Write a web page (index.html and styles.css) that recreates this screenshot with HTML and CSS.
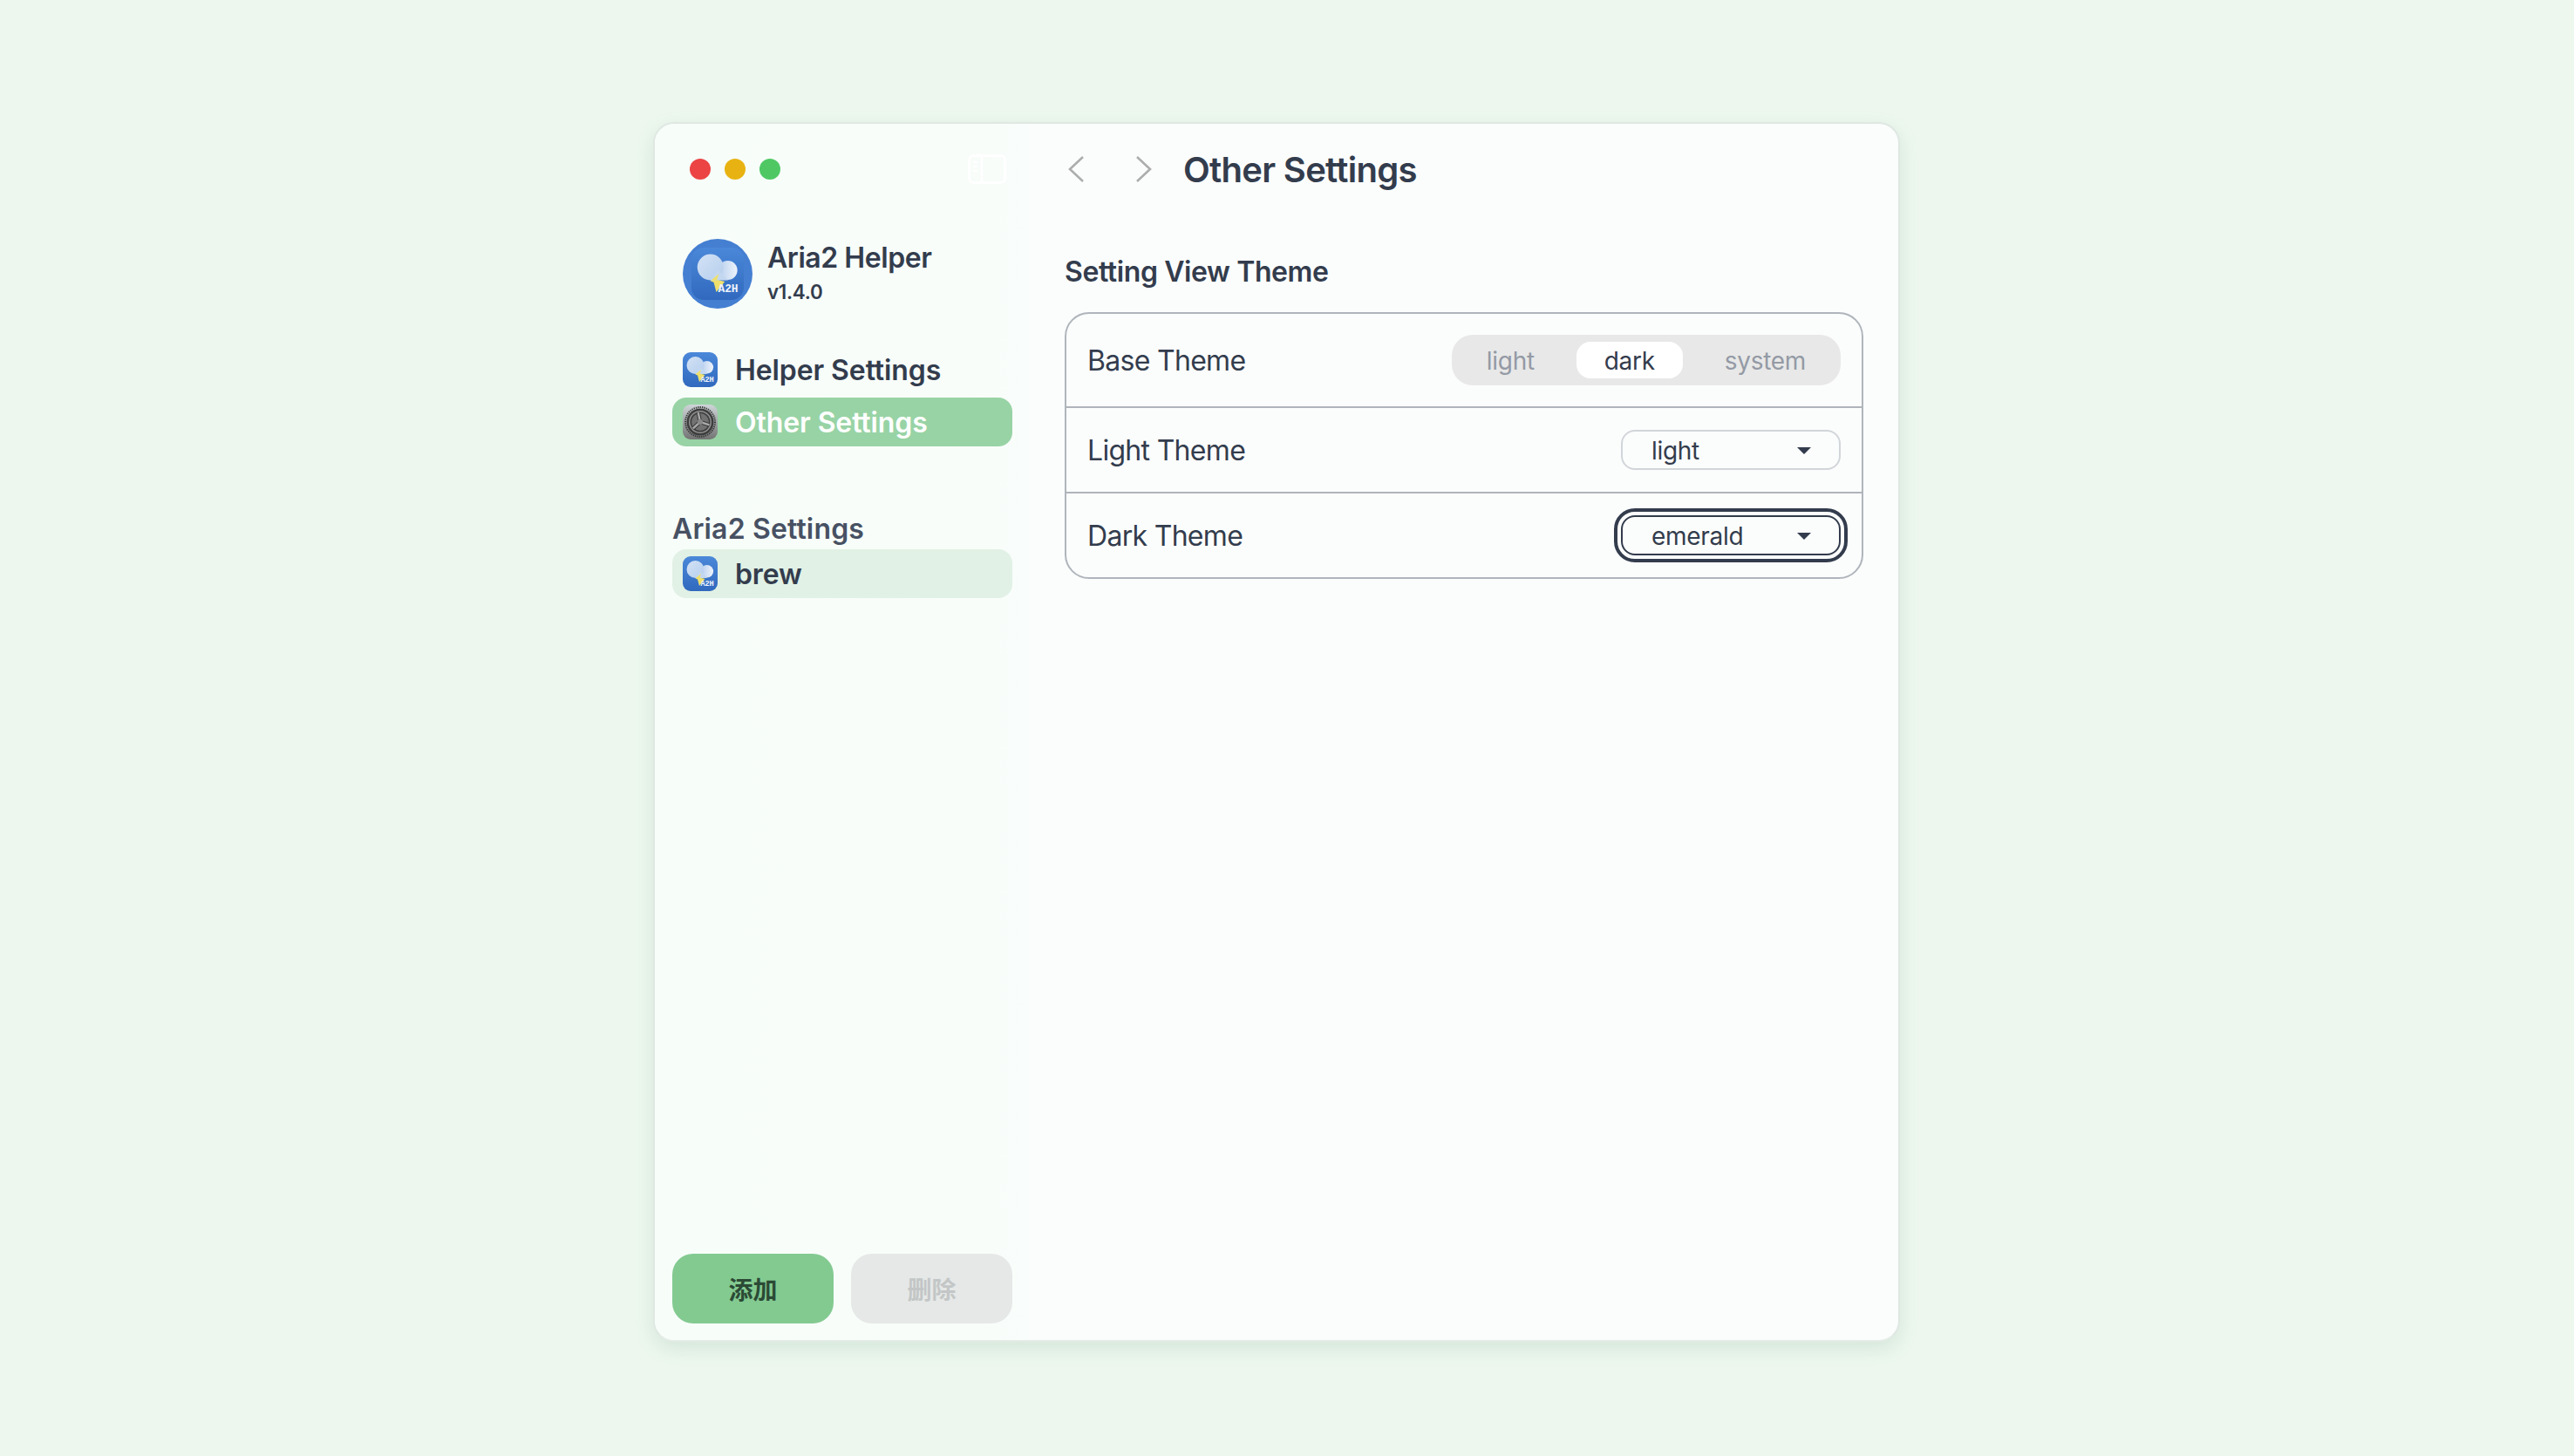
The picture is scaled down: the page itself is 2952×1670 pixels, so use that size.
FILE: index.html
```html
<!DOCTYPE html>
<html lang="en">
<head>
    <meta charset="UTF-8">
    <title>Aria2 Helper</title>
    <link rel="stylesheet" href="styles.css">
</head>
<body>
    <svg class="defs" width="0" height="0">
        <defs>
            <linearGradient id="tileBlue" x1="0" y1="0" x2="0" y2="1">
                <stop offset="0" stop-color="#4b88d9"/>
                <stop offset="1" stop-color="#3069be"/>
            </linearGradient>
            <linearGradient id="cloudFill" x1="0" y1="0" x2="1" y2="1">
                <stop offset="0" stop-color="#d3e2f5"/>
                <stop offset="1" stop-color="#b5ceed"/>
            </linearGradient>
            <linearGradient id="cloudFill2" x1="0" y1="0" x2="1" y2="0">
                <stop offset="0" stop-color="#b7cfee"/>
                <stop offset="1" stop-color="#eef3fb"/>
            </linearGradient>
            <linearGradient id="tileGrey" x1="0" y1="0" x2="0" y2="1">
                <stop offset="0" stop-color="#ced5d8"/>
                <stop offset="1" stop-color="#737373"/>
            </linearGradient>
            <symbol id="a2hArt" viewBox="0 0 40 40">
                <path d="M21 17 L19.5 24.5 L25.5 26 L19 34 L17 26.5 L14.5 25.5 Z" fill="#efe06c"/>
                <circle cx="27.8" cy="17.3" r="7.3" fill="url(#cloudFill2)"/>
                <circle cx="14.5" cy="15" r="10" fill="url(#cloudFill)"/>
                <path d="M14.5 25 H27.8 V24.6 L20 17 Z" fill="#c3d7f0"/>
                <path d="M21 20 L19.5 24.5 L22 25 H15 Z" fill="#efe06c"/>
                <text x="28" y="34" class="a2h-text" text-anchor="middle">A2H</text>
            </symbol>
            <symbol id="appTile" viewBox="0 0 40 40">
                <rect width="40" height="40" rx="9" fill="url(#tileBlue)"/>
                <use href="#a2hArt" width="40" height="40"/>
            </symbol>
            <symbol id="gearTile" viewBox="0 0 40 40">
                <rect width="40" height="40" rx="9" fill="url(#tileGrey)"/>
                <circle cx="20" cy="20" r="17" fill="none" stroke="#3c3c3c" stroke-width="2" stroke-dasharray="1.4 1"/>
                <circle cx="20" cy="20" r="15.5" fill="#3d3d3d"/>
                <circle cx="20" cy="20" r="13" fill="#929292"/>
                <circle cx="20" cy="20" r="11.5" fill="#3f3f3f"/>
                <circle cx="20" cy="20" r="10" fill="#727272"/>
                <g transform="rotate(-12 20 20)">
                    <path d="M20 20 V9 M20 20 L10.5 25.5 M20 20 L29.5 25.5" stroke="#3a3a3a" stroke-width="4.5"/>
                    <path d="M20 20 V9 M20 20 L10.5 25.5 M20 20 L29.5 25.5" stroke="#a9a9a9" stroke-width="2.4"/>
                </g>
                <circle cx="20" cy="20" r="3" fill="#8a8a8a"/>
            </symbol>
        </defs>
    </svg>

    <div class="window">
        <aside class="sidebar">
            <div class="titlebar">
                <div class="lights">
                    <span class="light light-red"></span>
                    <span class="light light-yellow"></span>
                    <span class="light light-green"></span>
                </div>
                <svg class="toggle" width="44" height="34" viewBox="0 0 44 34" fill="none" stroke="#fff" stroke-width="2.5">
                    <rect x="1.5" y="1.5" width="41" height="31" rx="5"/>
                    <path d="M16 2 V32"/>
                    <path d="M6 9 H11 M6 14 H11 M6 19 H11" stroke-width="2"/>
                </svg>
            </div>

            <div class="brand">
                <svg class="brand-logo" width="80" height="80" viewBox="0 0 80 80">
                    <circle cx="40" cy="40" r="40" fill="#447fd2"/>
                    <rect x="10" y="10" width="60" height="60" rx="14" fill="url(#tileBlue)"/>
                    <use href="#a2hArt" x="10" y="10" width="60" height="60"/>
                </svg>
                <div class="brand-text">
                    <div class="brand-name">Aria2 Helper</div>
                    <div class="brand-version">v1.4.0</div>
                </div>
            </div>

            <ul class="menu">
                <li class="menu-item">
                    <svg class="menu-icon"><use href="#appTile"/></svg>
                    <span>Helper Settings</span>
                </li>
                <li class="menu-item selected">
                    <svg class="menu-icon"><use href="#gearTile"/></svg>
                    <span>Other Settings</span>
                </li>
            </ul>

            <h3 class="menu-title">Aria2 Settings</h3>
            <ul class="menu">
                <li class="menu-item current">
                    <svg class="menu-icon"><use href="#appTile"/></svg>
                    <span>brew</span>
                </li>
            </ul>

            <div class="actions">
                <button class="btn btn-add">添加</button>
                <button class="btn btn-del">删除</button>
            </div>
        </aside>

        <main class="content">
            <header class="topbar">
                <svg class="chevron" width="20" height="32" viewBox="0 0 20 32" fill="none" stroke="#adadad" stroke-width="2.6">
                    <path d="M18 2 L3 16 L18 30"/>
                </svg>
                <svg class="chevron chevron-next" width="20" height="32" viewBox="0 0 20 32" fill="none" stroke="#adadad" stroke-width="2.6">
                    <path d="M2 2 L17 16 L2 30"/>
                </svg>
                <h1 class="page-title">Other Settings</h1>
            </header>

            <h2 class="section-title">Setting View Theme</h2>
            <div class="panel">
                <div class="row row-tall">
                    <span class="row-label">Base Theme</span>
                    <div class="tabs">
                        <span class="tab">light</span>
                        <span class="tab active">dark</span>
                        <span class="tab">system</span>
                    </div>
                </div>
                <div class="row">
                    <span class="row-label">Light Theme</span>
                    <div class="select">
                        <span>light</span>
                        <i class="caret"></i>
                    </div>
                </div>
                <div class="row">
                    <span class="row-label">Dark Theme</span>
                    <div class="select focused">
                        <span>emerald</span>
                        <i class="caret"></i>
                    </div>
                </div>
            </div>
        </main>
    </div>
</body>
</html>
```

FILE: styles.css
```css
*{
    margin: 0;
    padding: 0;
    box-sizing: border-box;
}
ul{
    list-style: none;
}
html, body{
    height: 100%;
}
body{
    background: #edf7ee;
    font-family: "Inter", "Noto Sans CJK SC", sans-serif;
    color: #333c4d;
    padding: 140px 0 0 749px;
    overflow: hidden;
}
.defs{
    display: block;
    height: 0;
}
.a2h-text{
    font-family: "Liberation Mono", monospace;
    font-size: 8.6px;
    font-weight: 700;
    fill: #eef4fc;
}
.window{
    width: 1430px;
    height: 1399px;
    display: flex;
    background: #fbfdfc;
    border: 2px solid #dfe8e3;
    border-bottom-color: #e4ece7;
    border-radius: 24px;
    box-shadow: 0 8px 22px rgba(90, 150, 110, 0.16);
    overflow: hidden;
}

/* sidebar */
.sidebar{
    width: 429px;
    flex: none;
    display: flex;
    flex-direction: column;
    padding: 1px 19px 19px 20px;
    background: linear-gradient(90deg, #f7fdf9 0%, #f8fdf9 80%, #f9fdfb 100%);
}
.titlebar{
    height: 102px;
    display: flex;
    align-items: center;
    justify-content: space-between;
    padding: 0 7px 0 20px;
}
.lights{
    display: flex;
    gap: 16px;
}
.light{
    width: 24px;
    height: 24px;
    border-radius: 50%;
}
.light-red{
    background: #ec4444;
}
.light-yellow{
    background: #e8b312;
}
.light-green{
    background: #4fc864;
}
.brand{
    display: flex;
    align-items: center;
    gap: 17px;
    margin-top: 29px;
    padding-left: 12px;
}
.brand-logo{
    flex: none;
}
.brand-name{
    font-size: 32px;
    line-height: 42px;
    font-weight: 600;
    letter-spacing: -0.45px;
}
.brand-version{
    font-size: 22.4px;
    line-height: 36px;
    font-weight: 600;
    letter-spacing: -0.3px;
}
.menu{
    display: flex;
    flex-direction: column;
    gap: 4px;
}
.brand + .menu{
    margin-top: 42px;
}
.menu-item{
    height: 56px;
    display: flex;
    align-items: center;
    gap: 20px;
    padding-left: 12px;
    border-radius: 16px;
    font-size: 32px;
    font-weight: 600;
    letter-spacing: -0.1px;
}
.menu-item.selected{
    background: #98d3a5;
    color: #ffffff;
}
.menu-item.current{
    background: #e1f1e5;
}
.menu-icon{
    width: 40px;
    height: 40px;
    flex: none;
}
.menu-title{
    margin: 75px 0 3px;
    font-size: 32px;
    line-height: 40px;
    font-weight: 600;
    letter-spacing: 0.15px;
    color: #475163;
}
.actions{
    margin-top: auto;
    display: flex;
    gap: 20px;
}
.btn{
    flex: 1;
    height: 80px;
    border: 0;
    border-radius: 24px;
    font-family: "Inter", "Noto Sans CJK SC", sans-serif;
    font-size: 28px;
    font-weight: 700;
}
.btn-add{
    background: #83ca91;
    color: #2b4a35;
}
.btn-del{
    background: #e5e8e7;
    color: #c3c6c6;
}

/* right side */
.content{
    flex: 1;
    padding: 1px 40px 0 41px;
}
.topbar{
    height: 102px;
    display: flex;
    align-items: center;
    padding-left: 3px;
}
.chevron-next{
    margin-left: 58px;
}
.page-title{
    margin-left: 35px;
    font-size: 40px;
    font-weight: 600;
    letter-spacing: -0.7px;
}
.section-title{
    margin: 47px 0 26px;
    font-size: 32px;
    line-height: 40px;
    font-weight: 600;
    letter-spacing: -0.4px;
}
.panel{
    border: 2px solid #b0b5bc;
    border-radius: 28px;
}
.row{
    height: 98px;
    display: flex;
    align-items: center;
    justify-content: space-between;
    padding: 0 24px;
    border-top: 2px solid #b0b5bc;
}
.row:first-child{
    border-top: 0;
}
.row-tall{
    height: 106px;
}
.row-label{
    font-size: 32px;
    letter-spacing: -0.7px;
}
.tabs{
    display: flex;
    gap: 16px;
    padding: 8px;
    background: #e8e8e8;
    border-radius: 24px;
}
.tab{
    height: 42px;
    line-height: 44px;
    padding: 0 32px;
    font-size: 28px;
    letter-spacing: -0.3px;
    color: #949aa5;
    border-radius: 16px;
}
.tab.active{
    background: #ffffff;
    color: #333c4d;
}
.select{
    width: 252px;
    height: 46px;
    display: flex;
    align-items: center;
    justify-content: space-between;
    padding: 0 32px 0 33px;
    font-size: 28px;
    letter-spacing: -0.3px;
    border: 2px solid #d2d5d9;
    border-radius: 16px;
}
.select span{
    padding-top: 2px;
}
.select.focused{
    border-color: #333c4d;
    outline: 4px solid #333c4d;
    outline-offset: 4px;
}
.caret{
    width: 0;
    height: 0;
    margin-top: 2px;
    border-left: 8px solid transparent;
    border-right: 8px solid transparent;
    border-top: 8px solid #333c4d;
}
```
